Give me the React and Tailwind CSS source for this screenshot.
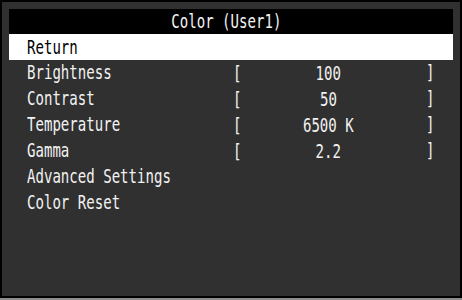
const rows = [
  { label: "Brightness", value: "100" },
  { label: "Contrast", value: "50" },
  { label: "Temperature", value: "6500 K" },
  { label: "Gamma", value: "2.2" },
  { label: "Advanced Settings" },
  { label: "Color Reset" },
];

function Osd({ children, center }) {
  return (
    <span
      className={
        "inline-block whitespace-nowrap font-['DejaVu_Sans_Mono',monospace] text-[19px] leading-none scale-x-[0.74] " +
        (center ? "origin-center" : "origin-left")
      }
    >
      {children}
    </span>
  );
}

export default function App() {
  return (
    <div className="w-[462px] h-[300px] bg-[#8c8c8c] pb-[2px]">
      <div className="h-full border-2 border-black bg-[#303030] px-[7px] pt-[7px] text-[#f2f2f2]">
        {/* title */}
        <div className="h-[25px] bg-black flex items-center justify-center pr-[10px]">
          <Osd center>Color (User1)</Osd>
        </div>

        {/* selected item */}
        <div className="h-[26px] bg-white text-black flex items-center pl-[18px]">
          <Osd>Return</Osd>
        </div>

        {rows.map((r) => (
          <div key={r.label} className="h-[26px] flex items-center pl-[18px] pr-[21px]">
            <div className="w-[206px] shrink-0">
              <Osd>{r.label}</Osd>
            </div>
            {r.value && (
              <>
                <Osd>[</Osd>
                <div className="flex-1 flex justify-center pr-[14px]">
                  <Osd center>{r.value}</Osd>
                </div>
                <div className="w-[6px]">
                  <Osd>]</Osd>
                </div>
              </>
            )}
          </div>
        ))}
      </div>
    </div>
  );
}
